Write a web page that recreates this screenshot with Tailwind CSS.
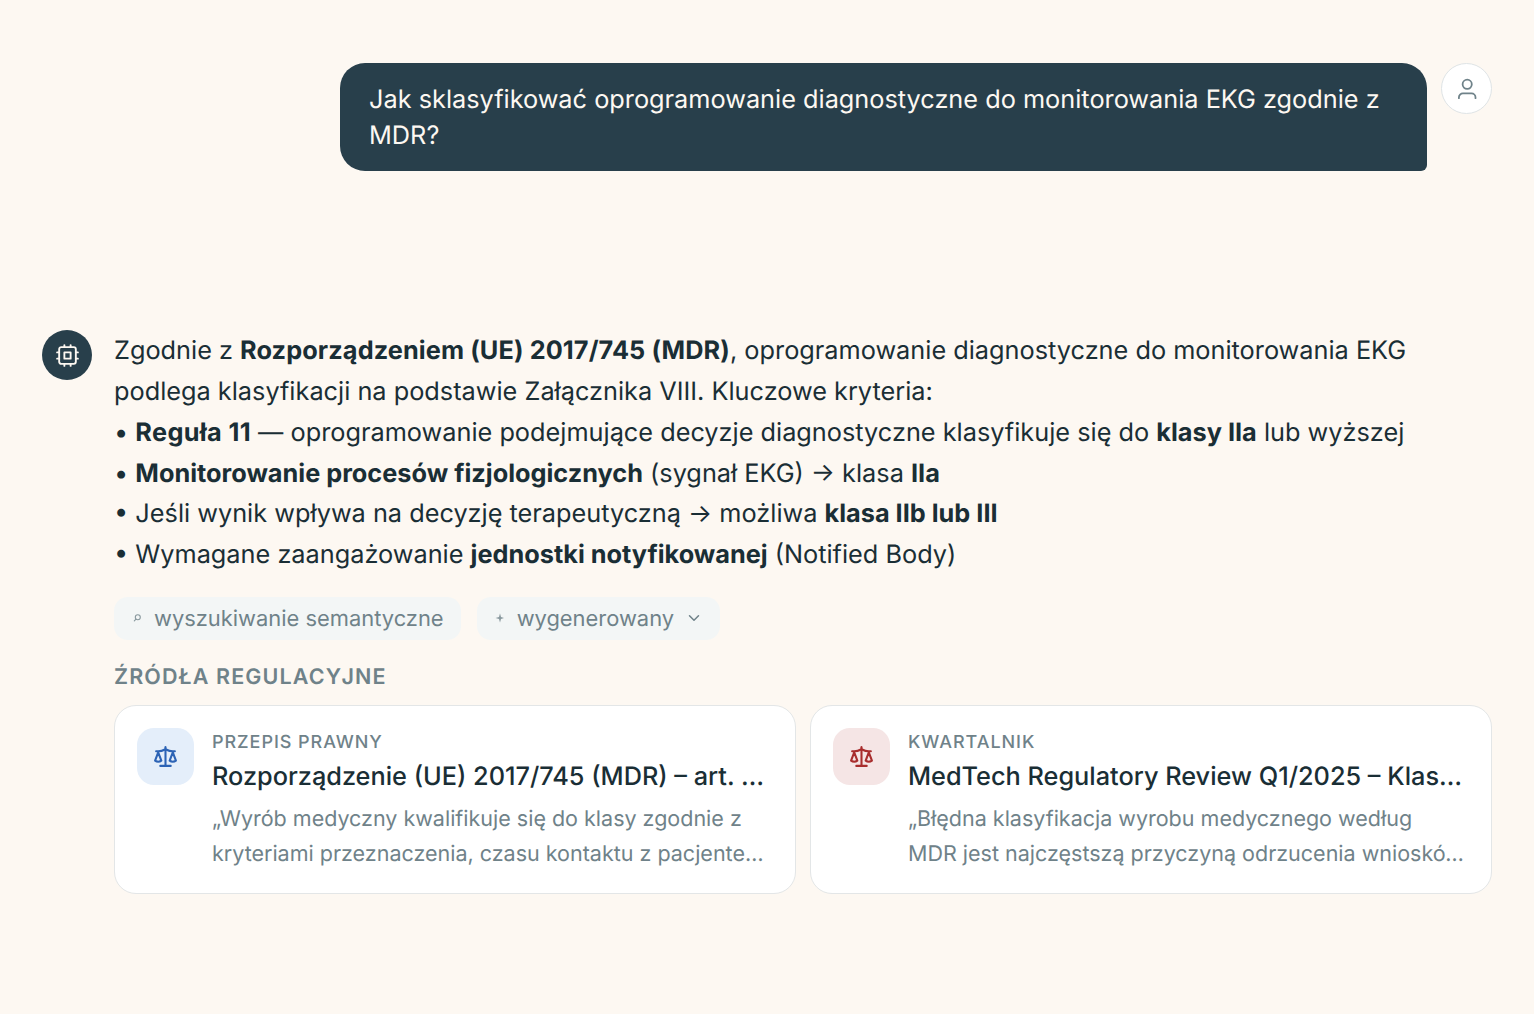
<!DOCTYPE html>
<html lang="pl">
  <head>
    <meta charset="UTF-8" />
    <title>Asystent regulacyjny</title>
    <script src="https://cdn.jsdelivr.net/npm/@tailwindcss/browser@4"></script>
  </head>
  <body class="bg-[#fdf8f2] font-['Inter',sans-serif] text-[#1a2e35] h-[1014px] overflow-hidden antialiased [text-rendering:geometricPrecision]">
    <main class="px-[42px] pt-[63px]">
      <!-- pytanie -->
      <div class="flex justify-end items-start gap-[14px]">
        <div class="w-[1087px] bg-[#283f4b] text-[#fdf8f2] text-[25.3px] leading-[36px] pl-[29px] pr-[29px] pt-[19px] pb-[17px] rounded-[25px] rounded-br-[6px]">
          Jak sklasyfikować oprogramowanie diagnostyczne do monitorowania EKG zgodnie z MDR?
        </div>
        <div class="w-[51px] h-[51px] shrink-0 rounded-full bg-white border border-[#dfe4e6] flex items-center justify-center">
          <svg class="w-[24px] h-[24px] text-[#6f8289]" viewBox="0 0 24 24" fill="none" stroke="currentColor" stroke-width="1.8" stroke-linecap="round" stroke-linejoin="round">
            <circle cx="12.2" cy="7.3" r="4.6" />
            <path d="M3.9 21.2v-.8a4 4 0 0 1 4-4h8.6a4 4 0 0 1 4 4v.8" />
          </svg>
        </div>
      </div>

      <!-- odpowiedz -->
      <div class="flex items-start gap-[22px] mt-[159px]">
        <div class="w-[50px] h-[50px] shrink-0 rounded-full bg-[#283f4b] flex items-center justify-center">
          <svg class="w-[25px] h-[25px] text-[#fdf8f2]" viewBox="0 0 24 24" fill="none" stroke="currentColor" stroke-width="1.8" stroke-linecap="round" stroke-linejoin="round">
            <rect x="4" y="4" width="16" height="16" rx="2" />
            <rect x="9" y="9" width="6" height="6" />
            <path d="M15 2v2M15 20v2M2 15h2M2 9h2M20 15h2M20 9h2M9 2v2M9 20v2" />
          </svg>
        </div>
        <div class="flex-1 min-w-0">
          <div class="text-[25.3px] leading-[40.8px] mt-[1.3px]">
            <p>Zgodnie z <strong class="font-bold tracking-[.1px]">Rozporządzeniem (UE) 2017/745 (MDR)</strong>, oprogramowanie diagnostyczne do monitorowania EKG podlega klasyfikacji na podstawie Załącznika VIII. Kluczowe kryteria:</p>
            <p>• <strong class="font-bold tracking-[.35px]">Reguła 11</strong> — oprogramowanie podejmujące decyzje diagnostyczne klasyfikuje się do <strong class="font-bold">klasy IIa</strong> lub wyższej</p>
            <p>• <strong class="font-bold">Monitorowanie procesów fizjologicznych</strong> (sygnał EKG) → klasa <strong class="font-bold">IIa</strong></p>
            <p>• Jeśli wynik wpływa na decyzję terapeutyczną → możliwa <strong class="font-bold">klasa IIb lub III</strong></p>
            <p>• Wymagane zaangażowanie <strong class="font-bold">jednostki notyfikowanej</strong> (Notified Body)</p>
          </div>

          <div class="flex gap-[16px] mt-[20.7px]">
            <div class="h-[43px] flex items-center gap-[13px] px-[17px] rounded-[14px] bg-[#f3f6f6] text-[#6f8289] text-[21.9px]">
              <svg class="w-[10px] h-[10px] opacity-80" viewBox="0 0 10 10" fill="none" stroke="currentColor" stroke-width="1.1" stroke-linecap="round">
                <circle cx="6.8" cy="4.3" r="2.5" />
                <path d="M5 6.1L3.3 7.9" />
              </svg>
              <span class="pt-[2px]">wyszukiwanie semantyczne</span>
            </div>
            <div class="h-[43px] flex items-center gap-[13px] px-[17px] rounded-[14px] bg-[#f3f6f6] text-[#6f8289] text-[21.9px]">
              <svg class="w-[10px] h-[10px] opacity-80" viewBox="0 0 10 10" fill="currentColor">
                <path d="M6 .6L7 4L10.4 5L7 6L6 9.4L5 6L1.6 5L5 4Z" />
              </svg>
              <span class="pt-[2px]">wygenerowany</span>
              <svg class="w-[18px] h-[18px] -ml-[2px]" viewBox="0 0 24 24" fill="none" stroke="currentColor" stroke-width="2" stroke-linecap="round" stroke-linejoin="round">
                <path d="M6 9l6 6 6-6" />
              </svg>
            </div>
          </div>

          <h2 class="text-[21.5px] leading-[28px] font-semibold tracking-[1.13px] text-[#6f8289] mt-[23px]">ŹRÓDŁA REGULACYJNE</h2>

          <div class="grid grid-cols-2 gap-[14px] mt-[14px]">
            <div class="h-[189px] bg-white border border-[#e3e6e7] rounded-[22px] p-[22px] flex gap-[18px]">
              <div class="w-[57px] h-[57px] shrink-0 rounded-[17px] bg-[#e4eefa] flex items-center justify-center text-[#2c63b5]">
                <svg class="w-[25px] h-[25px]" viewBox="0 0 24 24" fill="none" stroke="currentColor" stroke-width="2" stroke-linecap="round" stroke-linejoin="round">
                  <path d="m16 16 3-8 3 8c-.87.65-1.92 1-3 1s-2.13-.35-3-1Z" />
                  <path d="m2 16 3-8 3 8c-.87.65-1.92 1-3 1s-2.13-.35-3-1Z" />
                  <path d="M7 21h10" />
                  <path d="M12 3v18" />
                  <path d="M3 7h2c2 0 5-1 7-2 2 1 5 2 7 2h2" />
                </svg>
              </div>
              <div class="flex-1 min-w-0">
                <div class="text-[18px] leading-[26px] font-medium tracking-[.95px] text-[#6f8289] mt-[2px]">PRZEPIS PRAWNY</div>
                <div class="text-[25.3px] leading-[36px] font-medium truncate mt-[3px]">Rozporządzenie (UE) 2017/745 (MDR) – art. 51 ust. 1</div>
                <div class="text-[21.5px] leading-[35px] text-[#6f8289] mt-[7px]">
                  <p class="truncate">„Wyrób medyczny kwalifikuje się do klasy zgodnie z</p>
                  <p class="truncate">kryteriami przeznaczenia, czasu kontaktu z pacjentem i stopnia inwazyjności”</p>
                </div>
              </div>
            </div>
            <div class="h-[189px] bg-white border border-[#e3e6e7] rounded-[22px] p-[22px] flex gap-[18px]">
              <div class="w-[57px] h-[57px] shrink-0 rounded-[17px] bg-[#f5e5e5] flex items-center justify-center text-[#a82d2d]">
                <svg class="w-[25px] h-[25px]" viewBox="0 0 24 24" fill="none" stroke="currentColor" stroke-width="2" stroke-linecap="round" stroke-linejoin="round">
                  <path d="m16 16 3-8 3 8c-.87.65-1.92 1-3 1s-2.13-.35-3-1Z" />
                  <path d="m2 16 3-8 3 8c-.87.65-1.92 1-3 1s-2.13-.35-3-1Z" />
                  <path d="M7 21h10" />
                  <path d="M12 3v18" />
                  <path d="M3 7h2c2 0 5-1 7-2 2 1 5 2 7 2h2" />
                </svg>
              </div>
              <div class="flex-1 min-w-0">
                <div class="text-[18px] leading-[26px] font-medium tracking-[.95px] text-[#6f8289] mt-[2px]">KWARTALNIK</div>
                <div class="text-[25.3px] leading-[36px] font-medium truncate mt-[3px]">MedTech Regulatory Review Q1/2025 – Klasyfikacja oprogramowania</div>
                <div class="text-[21.5px] leading-[35px] text-[#6f8289] mt-[7px]">
                  <p class="truncate">„Błędna klasyfikacja wyrobu medycznego według</p>
                  <p class="truncate">MDR jest najczęstszą przyczyną odrzucenia wniosków przez jednostki notyfikowane”</p>
                </div>
              </div>
            </div>
          </div>
        </div>
      </div>
    </main>
  </body>
</html>
